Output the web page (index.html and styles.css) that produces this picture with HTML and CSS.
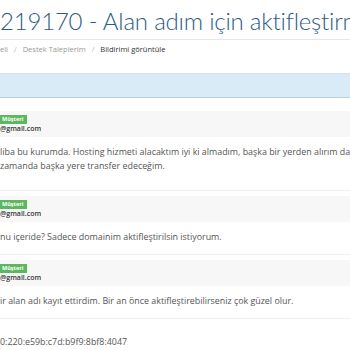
FILE: index.html
```html
<!DOCTYPE html>
<html lang="tr">
<head>
  <meta charset="UTF-8" />
  <title>Bildirimi görüntüle</title>
  <link rel="stylesheet" href="styles.css">
</head>
<body>
  <div class="page">
    <h1 class="title">219170 - Alan adım için aktifleştirme</h1>

    <div class="breadcrumb">
      <span>eli</span>
      <span class="sep">/</span>
      <span>Destek Taleplerim</span>
      <span class="sep">/</span>
      <span class="active">Bildirimi görüntüle</span>
    </div>

    <div class="alert-info"></div>

    <!-- ticket replies -->
    <div class="reply">
      <div class="reply-head">
        <span class="badge">Müşteri</span>
        <div class="email">@gmail.com</div>
      </div>
      <div class="reply-body reply-body-long">
        <p>liba bu kurumda. Hosting hizmeti alacaktım iyi ki almadım, başka bir yerden alırım da</p>
        <p>zamanda başka yere transfer edeceğim.</p>
      </div>
    </div>

    <div class="reply">
      <div class="reply-head">
        <span class="badge">Müşteri</span>
        <div class="email">@gmail.com</div>
      </div>
      <div class="reply-body">
        <p>nu içeride? Sadece domainim aktifleştirilsin istiyorum.</p>
      </div>
    </div>

    <div class="reply">
      <div class="reply-head">
        <span class="badge">Müşteri</span>
        <div class="email">@gmail.com</div>
      </div>
      <div class="reply-body">
        <p>ir alan adı kayıt ettirdim. Bir an önce aktifleştirebilirseniz çok güzel olur.</p>
      </div>
    </div>

    <div class="ip">0:220:e59b:c7d:b9f9:8bf8:4047</div>
  </div>
</body>
</html>
```

FILE: styles.css
```css
body {
  margin: 0;
  background: #fff;
  font-family: "Open Sans", sans-serif;
  color: #555;
  overflow: hidden;
}

.page {
  width: 350px;
  height: 350px;
  overflow: hidden;
}

.title {
  margin: 0;
  padding-top: 7px;
  padding-bottom: 4px;
  font-family: Lato, sans-serif;
  font-weight: 300;
  font-size: 24px;
  line-height: 28px;
  letter-spacing: -0.2px;
  color: #2c5b85;
  white-space: nowrap;
  overflow: hidden;
  border-bottom: 1px solid #e6e6e6;
}

.breadcrumb {
  padding-top: 4px;
  font-size: 7.5px;
  line-height: 10px;
  color: #999;
  white-space: nowrap;
}

.breadcrumb .sep {
  margin: 0 4px;
  color: #bbb;
}

.breadcrumb .active {
  color: #333;
}

.alert-info {
  margin-top: 19px;
  margin-bottom: 13px;
  height: 23px;
  background: #d9ebf7;
  border-top: 1px solid #cfe3f0;
  border-bottom: 1px solid #b9d2e2;
}

.reply {
  margin-bottom: 5px;
  border-bottom: 1px solid #eee;
}

.reply-head {
  background: #f7f7f7;
  padding: 4px 0 3px;
  font-size: 6px;
  line-height: 9px;
}

.badge {
  display: inline-block;
  vertical-align: top;
  background: #5cb85c;
  color: #fff;
  font-size: 5.5px;
  font-weight: 700;
  line-height: 9px;
  padding: 0 4px 0 2px;
}

.email {
  font-size: 7px;
  font-weight: 600;
  line-height: 10px;
  color: #333;
}

.reply-body {
  padding: 8px 0 10px;
  font-size: 8.9px;
  line-height: 14px;
  white-space: nowrap;
  overflow: hidden;
}

.reply-body-long {
  padding-bottom: 17px;
}

.reply-body p {
  margin: 0;
}

.ip {
  padding-top: 11px;
  font-size: 8.9px;
  line-height: 14px;
  white-space: nowrap;
}
```
